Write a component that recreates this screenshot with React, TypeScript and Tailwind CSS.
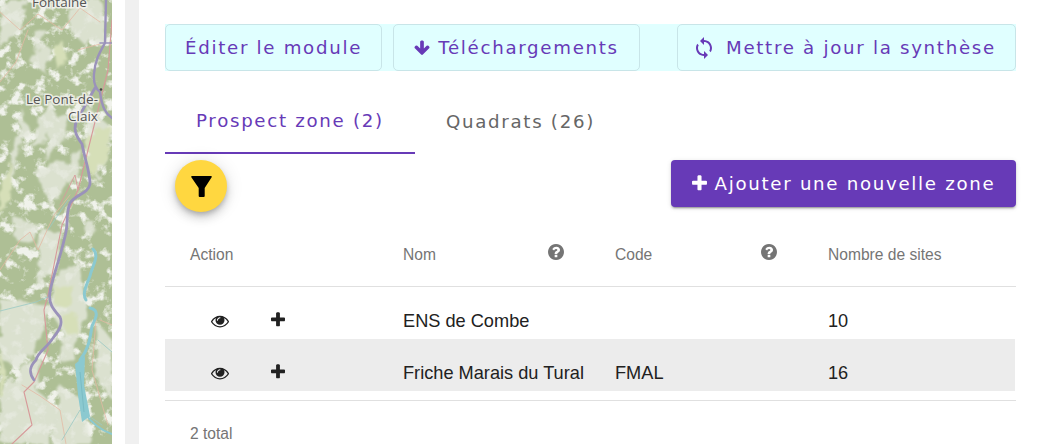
import { ReactNode } from "react";
import { MdSync } from "react-icons/md";

const lightPatches = [
  "M0 0 L30 0 L22 20 L8 42 L0 50 Z",
  "M72 0 L100 0 L104 40 L86 46 L70 30 Z",
  "M40 42 L52 50 L44 72 L30 62 Z",
  "M32 28 L48 32 L36 48 Z",
  "M22 108 L28 130 L12 180 L5 185 L14 150 Z",
  "M50 100 L58 118 L40 145 L30 145 Z",
  "M66 160 L84 150 L78 176 L50 205 L34 170 Z",
  "M50 122 L72 115 L62 140 L44 160 Z",
  "M15 218 L38 225 L30 245 L14 238 Z",
  "M86 105 L112 128 L96 180 L88 150 Z",
  "M86 220 L96 222 L92 235 L84 232 Z",
  "M60 270 L80 262 L88 320 L62 332 L50 310 Z",
  "M0 300 L50 305 L40 340 L18 368 L0 360 Z",
  "M62 330 L84 312 L72 360 L60 362 Z",
  "M20 368 L44 355 L36 390 L60 410 L46 444 L0 444 L0 395 Z",
  "M60 385 L82 400 L92 444 L52 444 Z",
  "M96 320 L112 340 L112 400 L98 380 Z",
  "M40 228 L62 232 L56 270 L36 290 Z",
];

const paleSpots = [
  "M10 160 L0 195 L0 215 L12 190 Z",
  "M54 52 L62 40 L66 60 L58 70 Z",
  "M88 135 L110 125 L108 150 L92 178 L86 160 Z",
  "M56 290 L72 282 L72 305 L56 306 Z",
  "M64 318 L76 312 L78 334 L64 332 Z",
  "M0 350 L6 370 L4 395 L0 400 Z",
];

function TerrainMap() {
  return (
    <svg width="112" height="444" viewBox="0 0 112 444" className="block shrink-0 bg-[#aebf95]">
      <defs>
        <filter id="soft" x="-10%" y="-10%" width="120%" height="120%">
          <feTurbulence type="fractalNoise" baseFrequency="0.08" numOctaves="3" seed="4" result="noise" />
          <feDisplacementMap in="SourceGraphic" in2="noise" scale="12" />
          <feGaussianBlur stdDeviation="1" />
        </filter>
        <filter id="speckle" x="0" y="0" width="100%" height="100%">
          <feTurbulence type="fractalNoise" baseFrequency="0.085" numOctaves="4" seed="11" />
          <feColorMatrix
            type="matrix"
            values="0 0 0 0 0.87  0 0 0 0 0.89  0 0 0 0 0.83  5 0 0 0 -2.55"
          />
          <feGaussianBlur stdDeviation="0.6" />
        </filter>
      </defs>
      <rect width="112" height="444" filter="url(#speckle)" />
      <g filter="url(#soft)" fill="#e3e7da" opacity="0.85">
        {lightPatches.map((d) => (
          <path key={d} d={d} />
        ))}
      </g>
      <g filter="url(#soft)" fill="#d6dfb8">
        {paleSpots.map((d) => (
          <path key={d} d={d} />
        ))}
      </g>

      <g fill="none" strokeLinecap="round" strokeLinejoin="round">
        <g stroke="#e4b9a4" strokeWidth="0.9" opacity="0.85">
          <path d="M0 12 L20 30 L38 14 L62 30 L80 8 L100 22" />
          <path d="M0 82 L16 62 L28 30 M78 50 L100 44" />
          <path d="M0 270 L20 240 L30 232 L38 250 L54 215 L70 195" />
          <path d="M100 320 L112 325 M96 320 L92 370 L108 425" />
          <path d="M22 385 L40 396 L60 410 L66 444" />
        </g>
        <path d="M112 20 L108 70 L88 150 L78 190 L62 225 L48 295 L44 310 L48 350 L34 382 L24 392 L32 425 L12 444" stroke="#d79a9a" strokeWidth="1.1" />
        <path d="M60 205 L75 175 L78 190" stroke="#d79a9a" strokeWidth="0.9" />
        <path d="M0 311 L36 302 L50 296 M68 200 L48 230 M112 352 L98 340 M102 425 L80 410 L62 440" stroke="#9bc9c4" strokeWidth="0.8" />
        <path
          d="M106 0 L105 43 C100 52 95 60 94 74 C93 84 97 90 100 92 C102 108 106 114 112 118"
          stroke="#9a92ba"
          strokeWidth="2.4"
        />
        <path d="M100 43 L112 43" stroke="#9a92ba" strokeWidth="1.6" />
        <path
          d="M95 88 C88 100 84 108 78 118 C72 128 76 136 82 144 C85 160 90 172 90 184 C88 194 76 194 70 203 C66 212 68 222 66 232 C60 260 52 278 50 292 C48 304 54 310 60 317 C64 326 56 334 50 342 C44 350 38 352 36 360 C30 366 28 372 34 380"
          stroke="#9a92ba"
          strokeWidth="2.8"
        />
        <path
          d="M93 249 C100 256 92 266 90 276 C86 286 82 294 86 300 M90 308 C100 310 96 318 92 326 C90 340 88 350 80 360"
          stroke="#8bc9d0"
          strokeWidth="3"
        />
        <path d="M84 412 C92 424 100 430 112 434" stroke="#8bc9d0" strokeWidth="2" />
      </g>
      <path d="M75 364 L85 356 L84 385 L90 416 L82 422 L78 395 Z" fill="#8bc9d0" />
      <path d="M80 372 L84 412" stroke="#6fb3bb" strokeWidth="1" strokeOpacity="0.6" fill="none" />
      <circle cx="101" cy="89.5" r="1.3" fill="#444" />
      <g
        fontFamily="'Open Sans', sans-serif"
        fontSize="13.5"
        fill="#555"
        stroke="#f4f4f0"
        strokeWidth="3"
        strokeOpacity="0.85"
        style={{ paintOrder: "stroke" }}
      >
        <text x="32" y="7">Fontaine</text>
        <text x="26" y="104">Le Pont-de-</text>
        <text x="68" y="121">Claix</text>
      </g>
    </svg>
  );
}

// Font Awesome 4 shapes, the package versions have thinner strokes
function PlusIcon({ className }: { className?: string }) {
  return (
    <svg viewBox="0 0 1408 1792" fill="currentColor" className={className}>
      <path d="M1408 736v192q0 40-28 68t-68 28h-416v416q0 40-28 68t-68 28h-192q-40 0-68-28t-28-68v-416h-416q-40 0-68-28t-28-68v-192q0-40 28-68t68-28h416v-416q0-40 28-68t68-28h192q40 0 68 28t28 68v416h416q40 0 68 28t28 68z" />
    </svg>
  );
}

function EyeIcon({ className }: { className?: string }) {
  return (
    <svg viewBox="0 0 1792 1792" fill="currentColor" className={className}>
      <path d="M1664 960q-152-236-381-353 61 104 61 225 0 185-131.500 316.500t-316.500 131.500-316.500-131.500-131.500-316.500q0-121 61-225-229 117-381 353 133 205 333.500 326.500t434.500 121.500 434.500-121.500 333.500-326.500zm-720-384q0-20-14-34t-34-14q-125 0-214.500 89.500t-89.500 214.500q0 20 14 34t34 14 34-14 14-34q0-86 61-147t147-61q20 0 34-14t14-34zm848 384q0 34-20 69-140 230-376.500 368.500t-499.500 138.500-499.500-139-376.500-368q-20-35-20-69t20-69q140-229 376.500-368t499.500-139 499.500 139 376.500 368q20 35 20 69z" />
    </svg>
  );
}

function ArrowDownIcon({ className }: { className?: string }) {
  return (
    <svg viewBox="0 0 1664 1792" fill="currentColor" className={className}>
      <path d="M1611 832q0 53-37 90l-651 652q-39 37-91 37-53 0-90-37l-651-652q-38-36-38-90 0-53 38-91l74-75q39-37 91-37 53 0 90 37l294 294v-704q0-52 38-90t90-38h128q52 0 90 38t38 90v704l294-294q37-37 90-37 52 0 91 37l75 75q37 39 37 91z" />
    </svg>
  );
}

function FilterIcon({ className }: { className?: string }) {
  return (
    <svg viewBox="0 0 21 21" fill="currentColor" className={className}>
      <path d="M1 0H20Q21.300 0 20.500 1.500L13.700 12V20Q13.700 21 12.700 21H8.700Q7.700 21 7.700 20V12L0.500 1.500Q-0.300 0 1 0Z" />
    </svg>
  );
}

function HelpIcon({ className }: { className?: string }) {
  return (
    <svg viewBox="128 128 1536 1536" fill="currentColor" className={className}>
      <path d="M1024 1376v-192q0-14-9-23t-23-9h-192q-14 0-23 9t-9 23v192q0 14 9 23t23 9h192q14 0 23-9t9-23zm256-672q0-88-55.500-163t-138.500-116-170-41q-243 0-371 213-15 24 8 42l132 100q7 6 19 6 16 0 25-12 53-68 86-92 34-24 86-24 48 0 85.500 26t37.500 59q0 38-20 61t-68 45q-63 28-115.500 86.500t-52.500 125.500v36q0 14 9 23t23 9h192q14 0 23-9t9-23q0-19 21.500-49.500t54.500-49.500q32-18 49-28.500t46-35 44.500-48 28-60.500 12.500-81zm384 192q0 209-103 385.500t-279.500 279.500-385.500 103-385.500-103-279.500-279.500-103-385.500 103-385.500 279.500-279.500 385.500-103 385.500 103 279.500 279.500 103 385.500z" />
    </svg>
  );
}

function ToolButton({ children, className }: { children: ReactNode; className: string }) {
  return (
    <button className={`flex h-[47px] items-center rounded-[5px] border border-[#c8e5e8] bg-[#e0ffff] text-[18.2px] tracking-[1.7px] text-[#673ab7] ${className}`}>
      {children}
    </button>
  );
}

function Row({ name, code, sites, striped }: { name: string; code: string; sites: string; striped?: boolean }) {
  return (
    <div className={`grid h-[52px] grid-cols-[213px_212px_213px_213px] items-center pt-[16px] text-[18.2px] text-[#212121] [font-family:'Liberation_Sans',sans-serif] ${striped ? "bg-[linear-gradient(#ececec,#ececec)] bg-[length:850px_100%] bg-no-repeat" : ""}`}>
      <div className="flex items-center">
        <EyeIcon className="ml-[46px] size-[18px] shrink-0" />
        <PlusIcon className="mb-[2px] ml-[42px] h-[18px] w-[14px] shrink-0" />
      </div>
      <div className="pl-[25px] pt-px">{name}</div>
      <div className="pl-[25px] pt-px">{code}</div>
      <div className="pl-[25px] pt-px">{sites}</div>
    </div>
  );
}

function HeaderCell({ label, help }: { label: string; help?: boolean }) {
  return (
    <div className="flex items-center justify-between pl-[25px] pr-[26px]">
      <span>{label}</span>
      {help && <HelpIcon className="mb-[6px] size-[16px] text-[#757575]" />}
    </div>
  );
}

export default function App() {
  return (
    <div className="flex h-[444px] w-[1041px] overflow-hidden bg-white [font-family:'DejaVu_Sans',sans-serif]">
      <TerrainMap />
      <div className="ml-[13px] w-[14px] shrink-0 bg-[#f0f0f0]" />
      <main className="ml-[26px] w-[851px] shrink-0 pt-[24px]">
        <div className="flex justify-between bg-[#e0ffff]">
          <div className="flex gap-[11px]">
            <ToolButton className="w-[217px] justify-center">Éditer le module</ToolButton>
            <ToolButton className="w-[247px] justify-center gap-[8px]">
              <ArrowDownIcon className="h-[18px] w-[16px]" />
              Téléchargements
            </ToolButton>
          </div>
          <ToolButton className="w-[339px] gap-[10px] pl-[14px]">
            <MdSync className="text-[24px]" />
            Mettre à jour la synthèse
          </ToolButton>
        </div>

        <div className="flex h-[83px] text-[18.2px] tracking-[1.7px] text-[#666]">
          <div className="flex h-full w-[250px] items-center border-b-2 border-[#673ab7] pl-[31px] pt-[18px] text-[#673ab7]">
            Prospect zone (2)
          </div>
          <div className="flex h-full items-center pl-[31px] pt-[18px]">Quadrats (26)</div>
        </div>

        <div className="mt-[6px] flex items-start justify-between">
          <button className="ml-[10px] flex size-[52px] items-center justify-center rounded-full bg-[#ffd740] text-black shadow-[0_3px_5px_-1px_rgba(0,0,0,0.2),0_6px_10px_0_rgba(0,0,0,0.14),0_1px_18px_0_rgba(0,0,0,0.12)]">
            <FilterIcon className="size-[21px]" />
          </button>
          <button className="flex h-[47px] w-[345px] items-center justify-center gap-[8px] rounded-[4px] bg-[#673ab7] text-[18.2px] tracking-[1.7px] text-white shadow-[0_3px_1px_-2px_rgba(0,0,0,0.2),0_2px_2px_0_rgba(0,0,0,0.14),0_1px_5px_0_rgba(0,0,0,0.12)]">
            <PlusIcon className="h-[19px] w-[15px]" />
            Ajouter une nouvelle zone
          </button>
        </div>

        <div className="mt-[12px] grid h-[63px] grid-cols-[213px_212px_213px_213px] items-center border-b border-[#e0e0e0] text-[15.6px] text-[#757575] [font-family:'Liberation_Sans',sans-serif]">
          <HeaderCell label="Action" />
          <HeaderCell label="Nom" help />
          <HeaderCell label="Code" help />
          <HeaderCell label="Nombre de sites" />
        </div>

        <Row name="ENS de Combe" code="" sites="10" />
        <Row name="Friche Marais du Tural" code="FMAL" sites="16" striped />

        <div className="mt-[9px] border-t border-[#e0e0e0] pl-[25px] pt-[21px] text-[15.6px] text-[#757575] [font-family:'Liberation_Sans',sans-serif]">
          2 total
        </div>
      </main>
    </div>
  );
}
